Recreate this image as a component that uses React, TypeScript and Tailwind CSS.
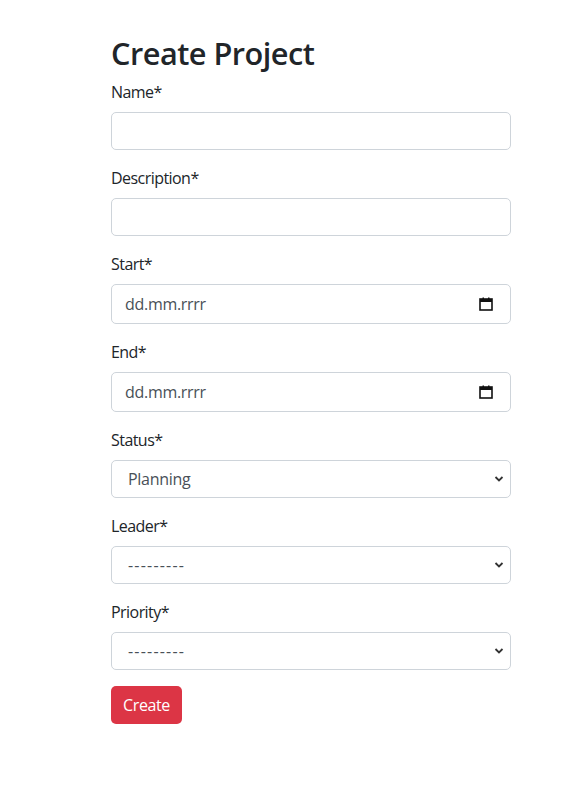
import React from "react";

const font = { fontFamily: '"Segoe UI", "Open Sans", "Noto Sans", sans-serif' };

function Label({ children }: { children: React.ReactNode }) {
  return <label className="block text-[16px] leading-[24px] mb-2 text-[#212529] tracking-[-0.55px]">{children}</label>;
}

function TextInput() {
  return (
    <input
      type="text"
      className="block w-full h-[38px] rounded-[5px] border border-[#ced4da] bg-white px-3 text-[16px] outline-none mb-4"
    />
  );
}

function DateInput() {
  return (
    <div className="flex items-center justify-between w-full h-[40px] rounded-[5px] border border-[#ced4da] bg-white pl-[13px] pr-[17px] mb-4">
      <span className="text-[16px] text-[#495057] tracking-[-0.3px]">dd.mm.rrrr</span>
      <svg width="14" height="14" viewBox="0 0 14 14">
        <rect x="1" y="2" width="12" height="11" fill="none" stroke="#111" strokeWidth="1.6" />
        <rect x="1" y="2" width="12" height="3" fill="#111" />
        <rect x="3.5" y="0.5" width="1.5" height="2.5" fill="#111" />
        <rect x="9" y="0.5" width="1.5" height="2.5" fill="#111" />
      </svg>
    </div>
  );
}

function SelectInput({ value, dashes }: { value: string; dashes?: boolean }) {
  return (
    <div className="relative mb-4">
      <select
        defaultValue={value}
        className={
          "block w-full h-[38px] appearance-none rounded-[5px] border border-[#ced4da] bg-white pl-[16px] pr-8 text-[16px] text-[#495057] outline-none " +
          (dashes ? "tracking-[1.2px]" : "tracking-[-0.3px]")
        }
        style={font}
      >
        <option value={value}>{value}</option>
      </select>
      <svg
        className="absolute right-[7px] top-[15px] pointer-events-none"
        width="10"
        height="8"
        viewBox="0 0 10 8"
      >
        <path d="M1.5 2 L5 5.5 L8.5 2" fill="none" stroke="#333" strokeWidth="1.8" />
      </svg>
    </div>
  );
}

export default function App() {
  return (
    <div className="min-h-[804px] bg-white text-[#212529]" style={font}>
      <div className="w-[400px] ml-[111px] pt-[35px]">
        <h1 className="text-[30.7px] leading-[37px] font-semibold mb-2 tracking-[-0.5px]">Create Project</h1>
        <Label>Name*</Label>
        <TextInput />
        <Label>Description*</Label>
        <TextInput />
        <Label>Start*</Label>
        <DateInput />
        <Label>End*</Label>
        <DateInput />
        <Label>Status*</Label>
        <SelectInput value="Planning" />
        <Label>Leader*</Label>
        <SelectInput value="---------" dashes />
        <Label>Priority*</Label>
        <SelectInput value="---------" dashes />
        <button className="h-[38px] w-[71px] rounded-[5px] bg-[#dc3545] text-white text-[16px] tracking-[-0.4px]">Create</button>
      </div>
    </div>
  );
}
